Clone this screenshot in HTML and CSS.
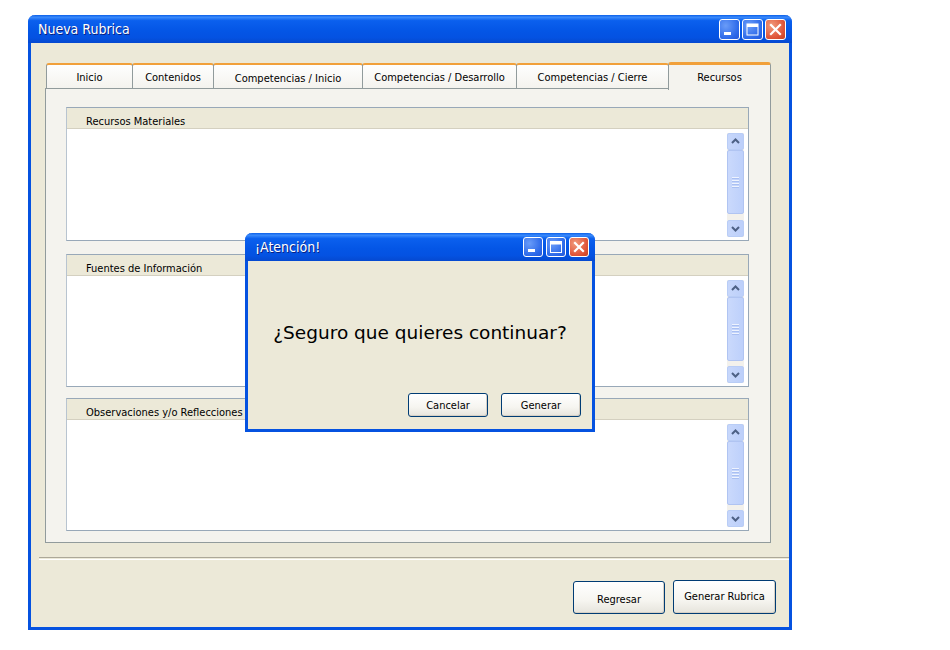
FILE: index.html
```html
<!DOCTYPE html>
<html>
<head>
<meta charset="utf-8">
<link rel="stylesheet" href="styles.css">
</head>
<body>
<div class="desktop">
  <div class="window main">
    <div class="titlebar">
      <span class="title">Nueva Rubrica</span>
      <div class="ctrls">
        <span class="cb min"><svg width="21" height="21" viewBox="0 0 21 21"><rect x="5" y="13" width="7" height="3" fill="#fff"/></svg></span>
        <span class="cb max"><svg width="21" height="21" viewBox="0 0 21 21"><rect x="5" y="5" width="11" height="11" fill="none" stroke="#fff" stroke-width="1"/><rect x="5" y="5" width="11" height="3" fill="#fff"/></svg></span>
        <span class="cb close"><svg width="21" height="21" viewBox="0 0 21 21"><path d="M6 6 L15 15 M15 6 L6 15" stroke="#fff" stroke-width="2.2" stroke-linecap="square"/></svg></span>
      </div>
    </div>
    <div class="wbody">
      <div class="tabs">
        <div class="tab t1">Inicio</div>
        <div class="tab t2">Contenidos</div>
        <div class="tab t3 low">Competencias / Inicio</div>
        <div class="tab t4">Competencias / Desarrollo</div>
        <div class="tab t5">Competencias / Cierre</div>
        <div class="tab t6 sel">Recursos</div>
      </div>
      <div class="panel">
        <div class="section">
          <div class="shead">Recursos Materiales</div>
          <div class="sarea"><div class="scroll"><span class="sbtn up"><svg width="15" height="15" viewBox="0 0 15 15"><path d="M4 9 L7.5 5.5 L11 9" fill="none" stroke="#4d6185" stroke-width="2"/></svg></span><span class="thumb"><i></i><i></i><i></i><i></i></span><span class="track"></span><span class="sbtn dn"><svg width="15" height="15" viewBox="0 0 15 15"><path d="M4 6 L7.5 9.5 L11 6" fill="none" stroke="#4d6185" stroke-width="2"/></svg></span></div></div>
        </div>
        <div class="section s2">
          <div class="shead">Fuentes de Información</div>
          <div class="sarea"><div class="scroll"><span class="sbtn up"><svg width="15" height="15" viewBox="0 0 15 15"><path d="M4 9 L7.5 5.5 L11 9" fill="none" stroke="#4d6185" stroke-width="2"/></svg></span><span class="thumb"><i></i><i></i><i></i><i></i></span><span class="track"></span><span class="sbtn dn"><svg width="15" height="15" viewBox="0 0 15 15"><path d="M4 6 L7.5 9.5 L11 6" fill="none" stroke="#4d6185" stroke-width="2"/></svg></span></div></div>
        </div>
        <div class="section s3">
          <div class="shead">Observaciones y/o Reflecciones</div>
          <div class="sarea"><div class="scroll"><span class="sbtn up"><svg width="15" height="15" viewBox="0 0 15 15"><path d="M4 9 L7.5 5.5 L11 9" fill="none" stroke="#4d6185" stroke-width="2"/></svg></span><span class="thumb"><i></i><i></i><i></i><i></i></span><span class="track"></span><span class="sbtn dn"><svg width="15" height="15" viewBox="0 0 15 15"><path d="M4 6 L7.5 9.5 L11 6" fill="none" stroke="#4d6185" stroke-width="2"/></svg></span></div></div>
        </div>
      </div>
      <div class="sep"></div>
      <div class="footer">
        <button class="btn b-reg">Regresar</button>
        <button class="btn b-gen">Generar Rubrica</button>
      </div>
    </div>
  </div>

  <div class="window dialog">
    <div class="titlebar">
      <span class="title">¡Atención!</span>
      <div class="ctrls small">
        <span class="cb min"><svg width="20" height="20" viewBox="0 0 20 20"><rect x="5" y="12" width="7" height="3" fill="#fff"/></svg></span>
        <span class="cb max"><svg width="20" height="20" viewBox="0 0 20 20"><rect x="4.5" y="4.5" width="11" height="11" fill="none" stroke="#fff" stroke-width="1"/><rect x="4.5" y="4.5" width="11" height="3" fill="#fff"/></svg></span>
        <span class="cb close"><svg width="20" height="20" viewBox="0 0 20 20"><path d="M6 6 L14 14 M14 6 L6 14" stroke="#fff" stroke-width="2.2" stroke-linecap="square"/></svg></span>
      </div>
    </div>
    <div class="dbody">
      <div class="msg">¿Seguro que quieres continuar?</div>
      <div class="dbtns">
        <button class="btn db">Cancelar</button>
        <button class="btn db">Generar</button>
      </div>
    </div>
  </div>
</div>
</body>
</html>
```

FILE: styles.css
```css
html, body { margin: 0; padding: 0; background: #fff; }
body { width: 950px; height: 650px; overflow: hidden; font-family: "DejaVu Sans Condensed", "DejaVu Sans", sans-serif; font-size: 11px; color: #000; }
.desktop { position: relative; width: 950px; height: 650px; }

.window { position: absolute; box-sizing: border-box; background: #ece9d8; border: 3px solid #0552e0; border-top: none; border-radius: 7px 7px 0 0; display: flex; flex-direction: column; }
.main { left: 28px; top: 15px; width: 764px; height: 615px; }
.dialog { left: 245px; top: 233px; width: 350px; height: 199px; }

.titlebar { margin: 0 -3px; height: 28px; flex: none; border-radius: 7px 7px 0 0; background: linear-gradient(#0a5fe9 0%, #3b8afb 8%, #0b60ee 20%, #0456e6 55%, #0452e2 80%, #0549d0 100%); display: flex; align-items: center; padding: 0 6px 0 10px; }
.title { color: #fff; font-family: "DejaVu Sans Condensed", "DejaVu Sans", sans-serif; font-size: 14px; text-shadow: 1px 1px 0 #0a1f80; flex: 1; }
.ctrls { display: flex; gap: 2px; }
.cb { width: 21px; height: 21px; box-sizing: border-box; border: 1px solid #fff; border-radius: 3px; display: flex; background: radial-gradient(circle at 30% 30%, #6a9cf8, #2b68e9 70%, #2457d8); overflow: hidden; }
.cb svg { margin: -1px; }
.cb.close { background: radial-gradient(circle at 30% 30%, #f19b7c, #e0553a 65%, #c4401f); }
.ctrls.small .cb { width: 20px; height: 20px; }
.ctrls.small { gap: 3px; margin-right: 0; }

.wbody { flex: 1; display: flex; flex-direction: column; padding: 19px 0 0 14px; }
.tabs { display: flex; height: 26px; align-items: flex-end; position: relative; z-index: 1; padding-left: 1px; }
.tab { box-sizing: border-box; height: 25px; background: linear-gradient(#fefefe, #f4f3ee); border: 1px solid #919b9c; border-bottom: none; border-top: 2px solid #f1a03a; border-radius: 3px 3px 0 0; text-align: center; padding-top: 6px; margin-right: -1px; }
.t1 { width: 87px; }
.t2 { width: 82px; }
.t3 { width: 150px; }
.t4 { width: 155px; }
.t5 { width: 153px; }
.t6 { width: 103px; }
.tab.sel { height: 28px; margin-bottom: -2px; background: #f4f3ee; border-top: 3px solid #f1a03a; padding-top: 6px; }
.tab.low { padding-top: 7px; }

.panel { width: 726px; height: 455px; box-sizing: border-box; background: #f4f3ee; border: 1px solid #919b9c; padding: 18px 21px 0 20px; display: flex; flex-direction: column; }
.section { height: 134px; box-sizing: border-box; border: 1px solid #98a8b8; border-left-color: #b8c4d0; display: flex; flex-direction: column; background: #fff; }
.s2 { margin-top: 13px; height: 133px; }
.s3 { margin-top: 11px; height: 133px; }
.shead { height: 21px; flex: none; box-sizing: border-box; background: #ece9d8; border-bottom: 1px solid #d4d0c0; padding: 7px 0 0 19px; line-height: 13px; }
.sarea { flex: 1; display: flex; justify-content: flex-end; padding: 4px 4px 3px 0; }
.scroll { width: 17px; display: flex; flex-direction: column; background: #f3f1ec; }
.sbtn { height: 17px; box-sizing: border-box; border: 1px solid #b9cdf6; border-radius: 2px; background: linear-gradient(90deg, #c7d7fb, #bccffa); display: flex; align-items: center; justify-content: center; }
.thumb { height: 64px; box-sizing: border-box; border: 1px solid #b0c4f2; border-radius: 2px; background: linear-gradient(90deg, #cad9fc, #bdd0fb); display: flex; flex-direction: column; align-items: center; justify-content: center; gap: 1px; }
.thumb i { display: block; width: 7px; height: 1px; background: #eef3fe; border-bottom: 1px solid #a9bff2; }
.track { flex: 1; }

.sep { margin: 14px 0 0 -6px; height: 1px; border-top: 1px solid #aca899; border-bottom: 1px solid #fff; }
.footer { display: flex; justify-content: flex-end; align-items: flex-start; padding: 20px 13px 0 0; gap: 8px; }
.btn { font-family: "DejaVu Sans Condensed", "DejaVu Sans", sans-serif; font-size: 11px; color: #000; border: 1px solid #003c74; border-radius: 3px; background: linear-gradient(#ffffff 0%, #f6f5f0 60%, #e6e4dc 100%); box-shadow: inset -1px -1px 0 #d6d0c5; padding: 0; }
.b-reg { width: 92px; height: 33px; margin-top: 1px; padding-top: 3px; }
.b-gen { width: 103px; height: 34px; padding-bottom: 2px; }

.dbody { flex: 1; display: flex; flex-direction: column; }
.msg { font-family: "DejaVu Sans", sans-serif; font-size: 18.5px; text-align: center; margin-top: 61px; height: 24px; }
.dbtns { display: flex; justify-content: flex-end; gap: 13px; padding: 47px 11px 0 0; }
.db { width: 80px; height: 24px; }
```
